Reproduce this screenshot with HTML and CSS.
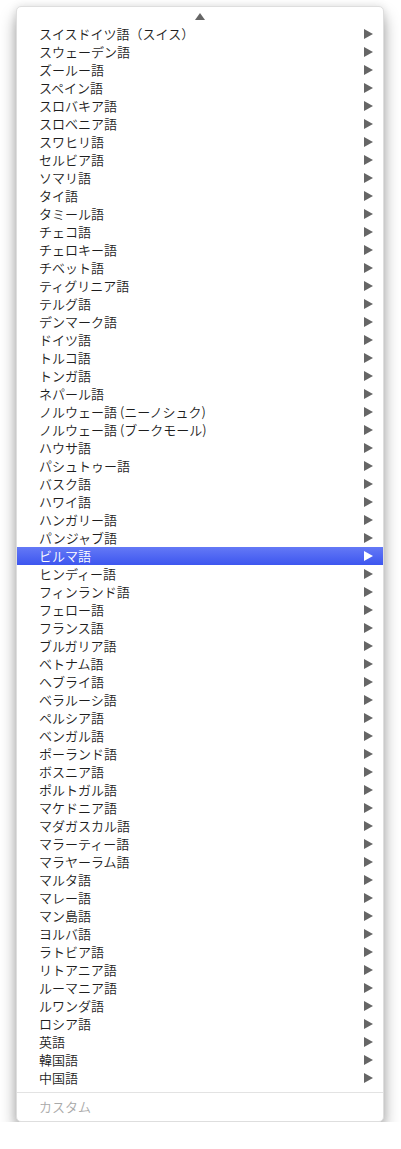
FILE: index.html
```html
<!DOCTYPE html>
<html lang="ja">
<head>
    <meta charset="UTF-8">
    <title>言語メニュー</title>
    <link rel="stylesheet" href="styles.css">
</head>
<body>
    <div class="menu">
        <div class="scroll-up"><span class="up-arrow"></span></div>
        <ul class="items">
            <li>スイスドイツ語（スイス）</li>
            <li>スウェーデン語</li>
            <li>ズールー語</li>
            <li>スペイン語</li>
            <li>スロバキア語</li>
            <li>スロベニア語</li>
            <li>スワヒリ語</li>
            <li>セルビア語</li>
            <li>ソマリ語</li>
            <li>タイ語</li>
            <li>タミール語</li>
            <li>チェコ語</li>
            <li>チェロキー語</li>
            <li>チベット語</li>
            <li>ティグリニア語</li>
            <li>テルグ語</li>
            <li>デンマーク語</li>
            <li>ドイツ語</li>
            <li>トルコ語</li>
            <li>トンガ語</li>
            <li>ネパール語</li>
            <li>ノルウェー語 (ニーノシュク)</li>
            <li>ノルウェー語 (ブークモール)</li>
            <li>ハウサ語</li>
            <li>パシュトゥー語</li>
            <li>バスク語</li>
            <li>ハワイ語</li>
            <li>ハンガリー語</li>
            <li>パンジャブ語</li>
            <li class="active">ビルマ語</li>
            <li>ヒンディー語</li>
            <li>フィンランド語</li>
            <li>フェロー語</li>
            <li>フランス語</li>
            <li>ブルガリア語</li>
            <li>ベトナム語</li>
            <li>ヘブライ語</li>
            <li>ベラルーシ語</li>
            <li>ペルシア語</li>
            <li>ベンガル語</li>
            <li>ポーランド語</li>
            <li>ボスニア語</li>
            <li>ポルトガル語</li>
            <li>マケドニア語</li>
            <li>マダガスカル語</li>
            <li>マラーティー語</li>
            <li>マラヤーラム語</li>
            <li>マルタ語</li>
            <li>マレー語</li>
            <li>マン島語</li>
            <li>ヨルバ語</li>
            <li>ラトビア語</li>
            <li>リトアニア語</li>
            <li>ルーマニア語</li>
            <li>ルワンダ語</li>
            <li>ロシア語</li>
            <li>英語</li>
            <li>韓国語</li>
            <li>中国語</li>
        </ul>
        <div class="separator"></div>
        <div class="custom">カスタム</div>
    </div>
</body>
</html>
```

FILE: styles.css
```css
body {
    margin: 0;
    background-color: #ffffff;
    font-family: "Noto Sans CJK JP", "Liberation Sans", sans-serif;
    font-size: 13px;
    font-weight: 350;
    color: #1e1e1e;
}
.menu {
    width: 366px;
    margin: 6px 0 0 16px;
    padding-bottom: 5px;
    background-color: #ffffff;
    border: 1px solid #dedede;
    border-radius: 5px;
    box-shadow: 0 10px 16px rgba(0, 0, 0, 0.35), 0 0 8px rgba(0, 0, 0, 0.1);
}
.scroll-up {
    height: 18px;
    display: flex;
    justify-content: center;
    align-items: center;
}
.up-arrow {
    width: 0;
    height: 0;
    margin-top: 1px;
    border-left: 5px solid transparent;
    border-right: 5px solid transparent;
    border-bottom: 7px solid #666666;
}
.items {
    list-style: none;
    margin: 0;
    padding: 0;
}
.items li {
    position: relative;
    height: 18px;
    line-height: 18px;
    padding-left: 22px;
    white-space: nowrap;
}
.items li::after {
    content: "";
    position: absolute;
    right: 10px;
    top: 4px;
    width: 0;
    height: 0;
    border-top: 5px solid transparent;
    border-bottom: 5px solid transparent;
    border-left: 9px solid #666666;
}
.items li.active {
    color: #ffffff;
    background: linear-gradient(#6479f6, #3d56ef);
}
.items li.active::after {
    border-left-color: #ffffff;
}
.separator {
    height: 1px;
    margin: 5px 0 5px;
    background-color: #e3e3e3;
}
.custom {
    height: 18px;
    line-height: 18px;
    padding-left: 22px;
    color: #a9a9a9;
}
```
